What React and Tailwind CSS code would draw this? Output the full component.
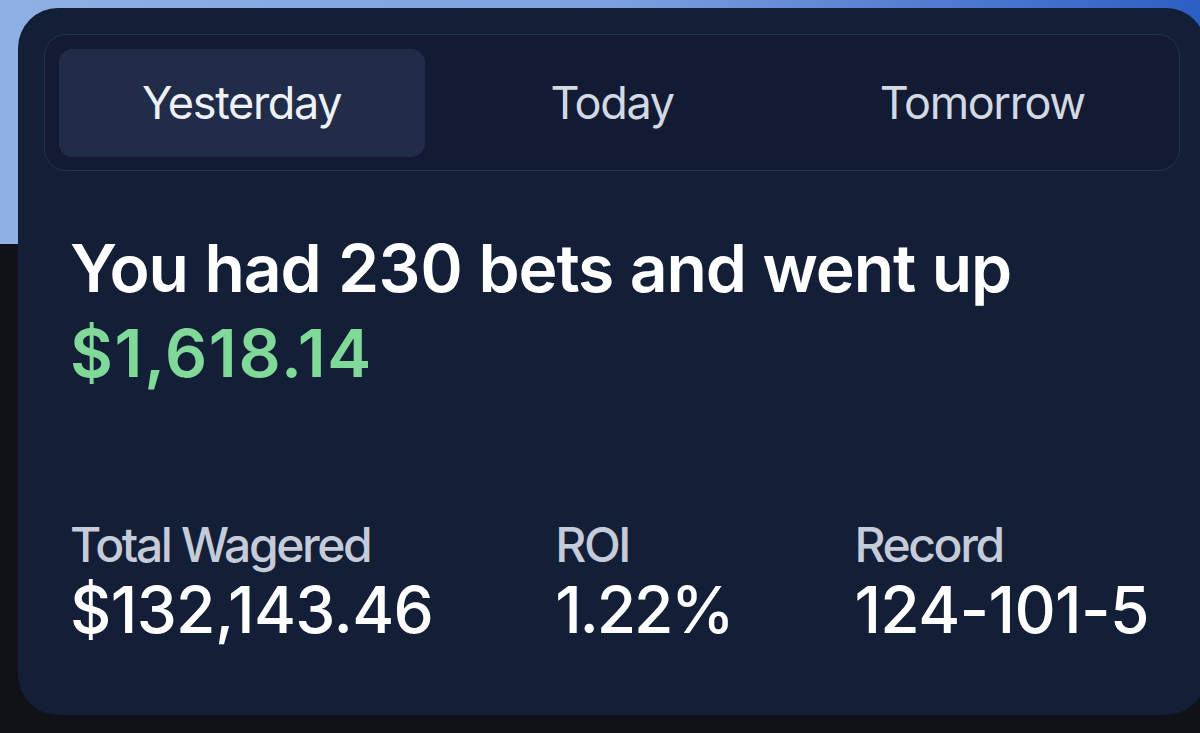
import { useState } from 'react';

const tabs = ['Yesterday', 'Today', 'Tomorrow'];

const stats = [
  { label: 'Total Wagered', value: '$132,143.46', tracking: 'tracking-[-0.01em]' },
  { label: 'ROI', value: '1.22%', tracking: 'tracking-[-0.035em]' },
  { label: 'Record', value: '124-101-5', tracking: 'tracking-[-0.01em]' },
];

const App = () => {
  const [active, setActive] = useState('Yesterday');

  return (
    <div
      className="h-[733px] w-full overflow-hidden pt-2 pl-[18px] bg-[linear-gradient(to_bottom,transparent_244px,#111217_244px),linear-gradient(to_right,#8fb0e4,#7ea2df_50%,#2c5fc4)]"
      style={{ fontFamily: 'Inter, "Noto Sans", sans-serif' }}
    >
      <div className="w-[1188px] h-[707px] rounded-[40px] bg-[#131e37] px-[26px] pt-[26px]">
        {/* Day tabs */}
        <div className="flex gap-[4px] rounded-[22px] border-[1.5px] border-[#27324c] bg-[#121b33] p-[13.5px]">
          {tabs.map((tab) => (
            <button
              key={tab}
              onClick={() => setActive(tab)}
              className={`flex-1 h-[108px] flex items-center justify-center rounded-[14px] text-[45px] tracking-[-0.03em] ${
                active === tab ? 'bg-[#212d48] text-[#eef1f6]' : 'text-[#d3d9e3]'
              }`}
            >
              {tab}
            </button>
          ))}
        </div>

        {/* Summary */}
        <div className="mt-[55px] pl-[26px]">
          <h1 className="text-[66px] leading-[85px] font-semibold tracking-[-0.017em] tabular-nums text-white">
            You had 230 bets and went up
          </h1>
          <p className="text-[66px] leading-[85px] font-semibold tracking-[0.025em] text-[#80d998]">
            $1,618.14
          </p>
        </div>

        {/* Stats */}
        <div className="mt-[120px] pl-[26px] flex gap-[122px]">
          {stats.map((s) => (
            <div key={s.label} className="flex flex-col">
              <span className="text-[48px] leading-[58px] font-medium tracking-[-0.05em] text-[#c5cbd8]">
                {s.label}
              </span>
              <span className={`text-[64px] leading-[72px] font-medium text-white whitespace-nowrap ${s.tracking}`}>
                {s.value}
              </span>
            </div>
          ))}
        </div>
      </div>
    </div>
  );
};

export default App;
